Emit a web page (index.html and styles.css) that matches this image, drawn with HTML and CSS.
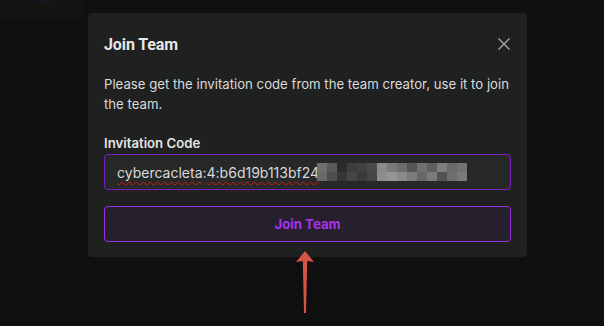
FILE: index.html
```html
<!DOCTYPE html>
<html lang="en">
<head>
<meta charset="UTF-8"/>
<title>Join Team</title>
<link rel="stylesheet" href="styles.css">
</head>
<body>
<div class="page">
  <div class="corner"><span class="glow"></span></div>

  <!-- ─── DIALOG ─────────────────────────────────────────── -->
  <div class="dialog">
    <div class="dlg-head">
      <h2>Join Team</h2>
      <button class="close" title="Close">
        <svg width="14" height="14" viewBox="0 0 14 14"><path d="M1.5 1.5L12.5 12.5M12.5 1.5L1.5 12.5" stroke="#a9abab" stroke-width="1.4" fill="none"/></svg>
      </button>
    </div>
    <p class="desc">Please get the invitation code from the team creator, use it to join the team.</p>
    <label class="lbl">Invitation Code</label>
    <div class="field">
      <span class="typo">cybercacleta</span>:<span class="typo">4:b6d19b113bf24</span><span class="mosaic">
        <i style="background:#6f6f6f"></i><i style="background:#5a5a5a"></i><i style="background:#2c2c2c"></i><i style="background:#3c3c3c"></i><i style="background:#404040"></i><i style="background:#4a4a4a"></i><i style="background:#8a8a8a"></i><i style="background:#7a7a7a"></i><i style="background:#6c6c6c"></i><i style="background:#555"></i><i style="background:#707070"></i><i style="background:#5f5f5f"></i><i style="background:#7d7d7d"></i><i style="background:#6a6a6a"></i><i style="background:#737373"></i>
        <i style="background:#6a6a6a"></i><i style="background:#4e4e4e"></i><i style="background:#363636"></i><i style="background:#454545"></i><i style="background:#3a3a3a"></i><i style="background:#454545"></i><i style="background:#8e8e8e"></i><i style="background:#959595"></i><i style="background:#8a8a8a"></i><i style="background:#7b7b7b"></i><i style="background:#686868"></i><i style="background:#7a7a7a"></i><i style="background:#525252"></i><i style="background:#6e6e6e"></i><i style="background:#7a7a7a"></i>
      </span>
    </div>
    <button class="join">Join Team</button>
  </div>

  <!-- ─── ANNOTATION ARROW ──────────────────────────────── -->
  <svg class="arrow" width="30" height="64" viewBox="0 0 30 64">
    <path d="M15 0L24 11L17.2 10L16 62L14 62L12.8 10L6 11Z" fill="#d65446"/>
  </svg>
</div>
</body>
</html>
```

FILE: styles.css
```css
*,*::before,*::after{box-sizing:border-box;margin:0;padding:0}
body{background:#101010;font-family:"Inter","Noto Sans",sans-serif;color:#dcdcdc}
.page{position:relative;width:604px;height:326px;overflow:hidden}

/* faint panel left behind the dialog */
.corner{position:absolute;left:0;top:0;width:83px;height:18px;background:#131514;overflow:hidden}
.glow{position:absolute;left:36px;top:-5px;width:18px;height:7px;border-radius:50%;background:#1b1328}

/* ─── DIALOG ─────────────────────────────────────────────── */
.dialog{position:absolute;left:88px;top:13px;width:439px;padding:16px 16px 15px;background:#1f2020;border-radius:4px}
.dlg-head{display:flex;justify-content:space-between;align-items:center;height:30px}
.dlg-head h2{font-family:Roboto,sans-serif;font-size:16px;font-weight:700;color:#e6e6e6;letter-spacing:-.1px}
.close{background:none;border:none;display:grid;place-items:center;width:16px;height:16px;margin-right:-1px;cursor:pointer}
.desc{margin-top:15px;font-size:13.2px;line-height:20px;color:#dadada}
.lbl{display:block;margin-top:20px;font-size:13.2px;font-weight:600;line-height:18px;color:#e4e4e4}

.field{margin-top:2px;height:36px;display:flex;align-items:center;padding:0 12px;border:1px solid #7a1fc2;border-radius:4px;background:#272828;font-size:14px;color:#d8d8d8;white-space:nowrap}
.typo{text-decoration:underline wavy #d01818;text-decoration-thickness:1px;text-underline-offset:3px}
.mosaic{display:grid;grid-template-columns:repeat(15,10px);grid-auto-rows:9px;margin-left:-2px}
.mosaic i{display:block}

.join{margin-top:16px;width:100%;height:36px;border:1px solid #9a2fe0;border-radius:4px;background:#261f2d;color:#a634e4;font-family:inherit;font-size:13.2px;font-weight:700;cursor:pointer}

.arrow{position:absolute;left:290px;top:251px}
```
